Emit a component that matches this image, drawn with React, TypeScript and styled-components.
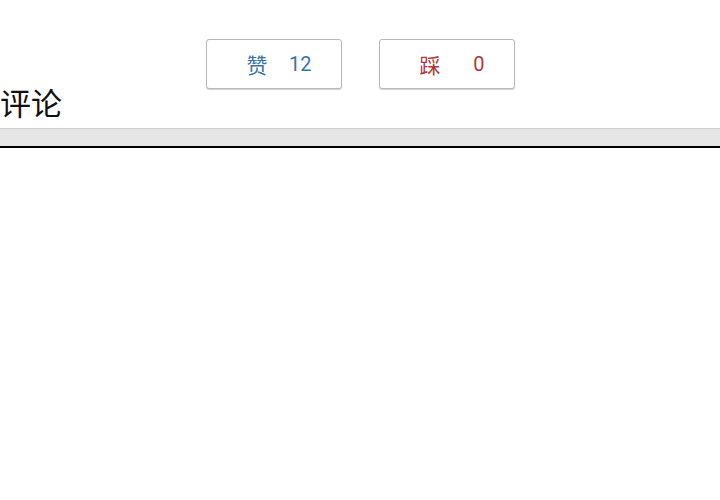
import React from "react";
import styled, { createGlobalStyle } from "styled-components";

const Global = createGlobalStyle`
  html, body { margin: 0; padding: 0; background: #fff; }
  body { font-family: Roboto, "Noto Sans CJK SC", sans-serif; }
`;

const Page = styled.div`
  width: 720px;
  height: 500px;
  background: #fff;
  display: flex;
  flex-direction: column;
`;

const VoteRow = styled.div`
  display: flex;
  justify-content: center;
  gap: 37px;
  padding-top: 39px;
`;

const VoteButton = styled.button<{ $tone: "up" | "down" }>`
  width: 136px;
  height: 50px;
  box-sizing: border-box;
  display: flex;
  align-items: center;
  justify-content: space-between;
  padding: 0 29px 0 40px;
  background: #fff;
  border: 1px solid #b8b8b8;
  border-radius: 3px;
  box-shadow: 0 1px 1px rgba(0, 0, 0, 0.18);
  font-family: Roboto, "Noto Sans CJK SC", sans-serif;
  font-size: 20px;
  color: ${(p) => (p.$tone === "up" ? "#3a72b0" : "#b03636")};
  cursor: pointer;
`;

const Label = styled.span`
  font-family: "Noto Sans CJK SC", sans-serif;
  font-size: 21px;
`;

const Count = styled.span``;

const Heading = styled.div`
  font-family: "Noto Sans CJK SC", sans-serif;
  font-size: 31px;
  line-height: 36px;
  color: #111;
  margin-top: -5px;
`;

const Bar = styled.div`
  margin-top: 8px;
  height: 20px;
  box-sizing: border-box;
  background: #e6e6e6;
  border-top: 1px solid #cdcdcd;
  border-bottom: 2px solid #000;
`;

export default function App() {
  return (
    <Page>
      <Global />
      <VoteRow>
        <VoteButton $tone="up">
          <Label>赞</Label>
          <Count>12</Count>
        </VoteButton>
        <VoteButton $tone="down">
          <Label>踩</Label>
          <Count>0</Count>
        </VoteButton>
      </VoteRow>
      <Heading>评论</Heading>
      <Bar />
    </Page>
  );
}
